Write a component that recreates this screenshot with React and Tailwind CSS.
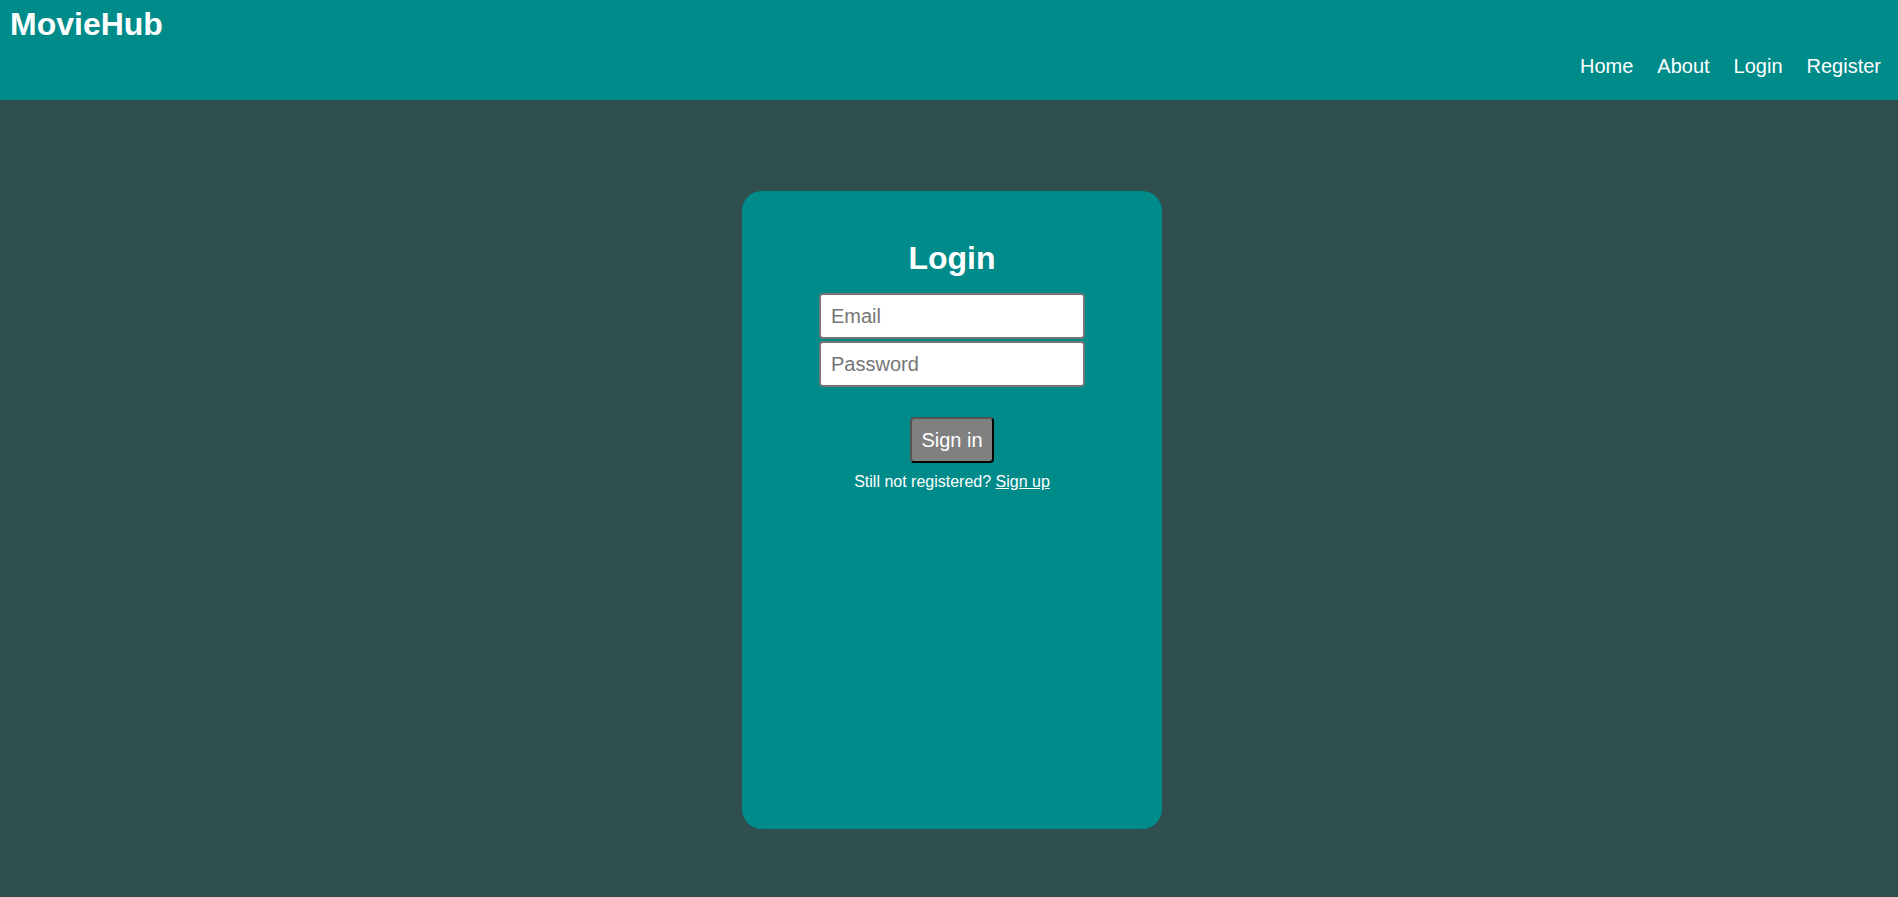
import React from 'react';

const links = ['Home', 'About', 'Login', 'Register'];

export default function App() {
  return (
    <div className="min-h-[897px] bg-[#2f4f4f] font-['Liberation_Sans',Arial,sans-serif] text-white">
      <header className="flex h-[100px] flex-col bg-[#008b8b] px-[10px]">
        <h1 className="pt-[6px] text-[32px] font-bold leading-[37px]">MovieHub</h1>
        <nav className="mt-[12px] flex justify-end gap-[24px] pr-[7px]">
          {links.map((l) => (
            <a key={l} href="#" className="text-[20px] leading-[23px]">
              {l}
            </a>
          ))}
        </nav>
      </header>

      <main className="flex justify-center pt-[91px] pl-[6px]">
        <div className="flex h-[638px] w-[420px] flex-col items-center rounded-[20px] bg-[#008b8b] pt-[49px]">
          <h2 className="text-[32px] font-bold leading-[37px]">Login</h2>
          <form className="mt-[16px] flex flex-col items-center">
            <input
              type="email"
              placeholder="Email"
              className="h-[46px] w-[266px] rounded-[4px] border-2 border-[#767676] bg-white px-[10px] text-[20px] text-black placeholder:text-[#757575] outline-none"
            />
            <input
              type="password"
              placeholder="Password"
              className="mt-[2px] h-[46px] w-[266px] rounded-[4px] border-2 border-[#767676] bg-white px-[10px] text-[20px] text-black placeholder:text-[#757575] outline-none"
            />
            <button
              type="button"
              className="mt-[30px] h-[46px] w-[84px] rounded-[4px] border-2 border-[#555555] border-r-black border-b-black bg-[#808080] text-[20px] text-white"
            >
              Sign in
            </button>
          </form>
          <p className="mt-[10px] text-[16px] leading-[18px]">
            Still not registered? <a href="#" className="underline">Sign up</a>
          </p>
        </div>
      </main>
    </div>
  );
}
